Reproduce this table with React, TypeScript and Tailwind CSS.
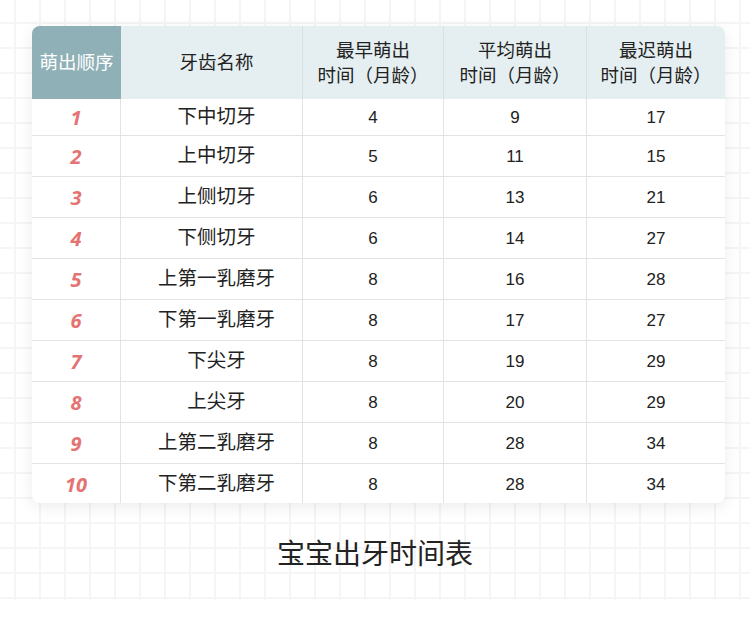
const rows = [
  { n: 1, name: "下中切牙", early: 4, avg: 9, late: 17 },
  { n: 2, name: "上中切牙", early: 5, avg: 11, late: 15 },
  { n: 3, name: "上侧切牙", early: 6, avg: 13, late: 21 },
  { n: 4, name: "下侧切牙", early: 6, avg: 14, late: 27 },
  { n: 5, name: "上第一乳磨牙", early: 8, avg: 16, late: 28 },
  { n: 6, name: "下第一乳磨牙", early: 8, avg: 17, late: 27 },
  { n: 7, name: "下尖牙", early: 8, avg: 19, late: 29 },
  { n: 8, name: "上尖牙", early: 8, avg: 20, late: 29 },
  { n: 9, name: "上第二乳磨牙", early: 8, avg: 28, late: 34 },
  { n: 10, name: "下第二乳磨牙", early: 8, avg: 28, late: 34 },
]

const cols = "grid grid-cols-[89px_182px_141px_143px_138px]"

function rowHeight(i: number) {
  if (i === 0) return "h-[36px]"
  if (i === rows.length - 1) return "h-[40px]"
  return "h-[41px]"
}

export default function App() {
  return (
    <div className="h-[630px] w-[750px] bg-white font-['Liberation_Sans','Noto_Sans_CJK_SC',sans-serif] text-[#222]">
      <div className="flex h-[600px] flex-col bg-[linear-gradient(to_right,#f5f5f5_2px,transparent_2px),linear-gradient(to_bottom,#f5f5f5_2px,transparent_2px)] bg-[size:25px_25px] bg-[position:14px_22px] pt-[26px]">
        <div className="ml-[32px] w-[693px] overflow-hidden rounded-[8px] bg-white shadow-[0_4px_16px_rgba(0,0,0,0.08)]">
          <div className={`${cols} h-[73px] bg-[#e5eff1]`}>
            <div className="flex items-center justify-center bg-[#8fb0b6] text-[18.5px] text-white">
              萌出顺序
            </div>
            <div className="flex items-center justify-center border-r border-[#d6e1e4] pl-[10px] text-[18.5px]">
              牙齿名称
            </div>
            {["最早萌出", "平均萌出", "最迟萌出"].map((t, i) => (
              <div
                key={t}
                className={`flex flex-col items-center justify-center text-[18.5px] leading-[25px] ${
                  i < 2 ? "border-r border-[#d6e1e4]" : ""
                }`}
              >
                <span>{t}</span>
                <span>时间（月龄）</span>
              </div>
            ))}
          </div>

          {rows.map((r, i) => (
            <div
              key={r.n}
              className={`${cols} ${rowHeight(i)} ${i > 0 ? "border-t border-[#e3e3e3]" : ""}`}
            >
              <div className="flex items-center justify-center border-r border-[#e3e3e3] pt-[2px] font-['Open_Sans',sans-serif] text-[20px] font-bold italic text-[#e47373]">
                {r.n}
              </div>
              <div className="flex items-center justify-center border-r border-[#e3e3e3] pl-[10px] text-[19.5px]">
                {r.name}
              </div>
              <div className="flex items-center justify-center border-r border-[#e3e3e3] pt-[2px] text-[17px]">
                {r.early}
              </div>
              <div className="flex items-center justify-center border-r border-[#e3e3e3] pt-[2px] text-[17px]">
                {r.avg}
              </div>
              <div className="flex items-center justify-center pt-[2px] text-[17px]">
                {r.late}
              </div>
            </div>
          ))}
        </div>

        <h1 className="mt-[36px] text-center text-[28px] leading-[32px] text-[#222]">宝宝出牙时间表</h1>
      </div>
    </div>
  )
}
